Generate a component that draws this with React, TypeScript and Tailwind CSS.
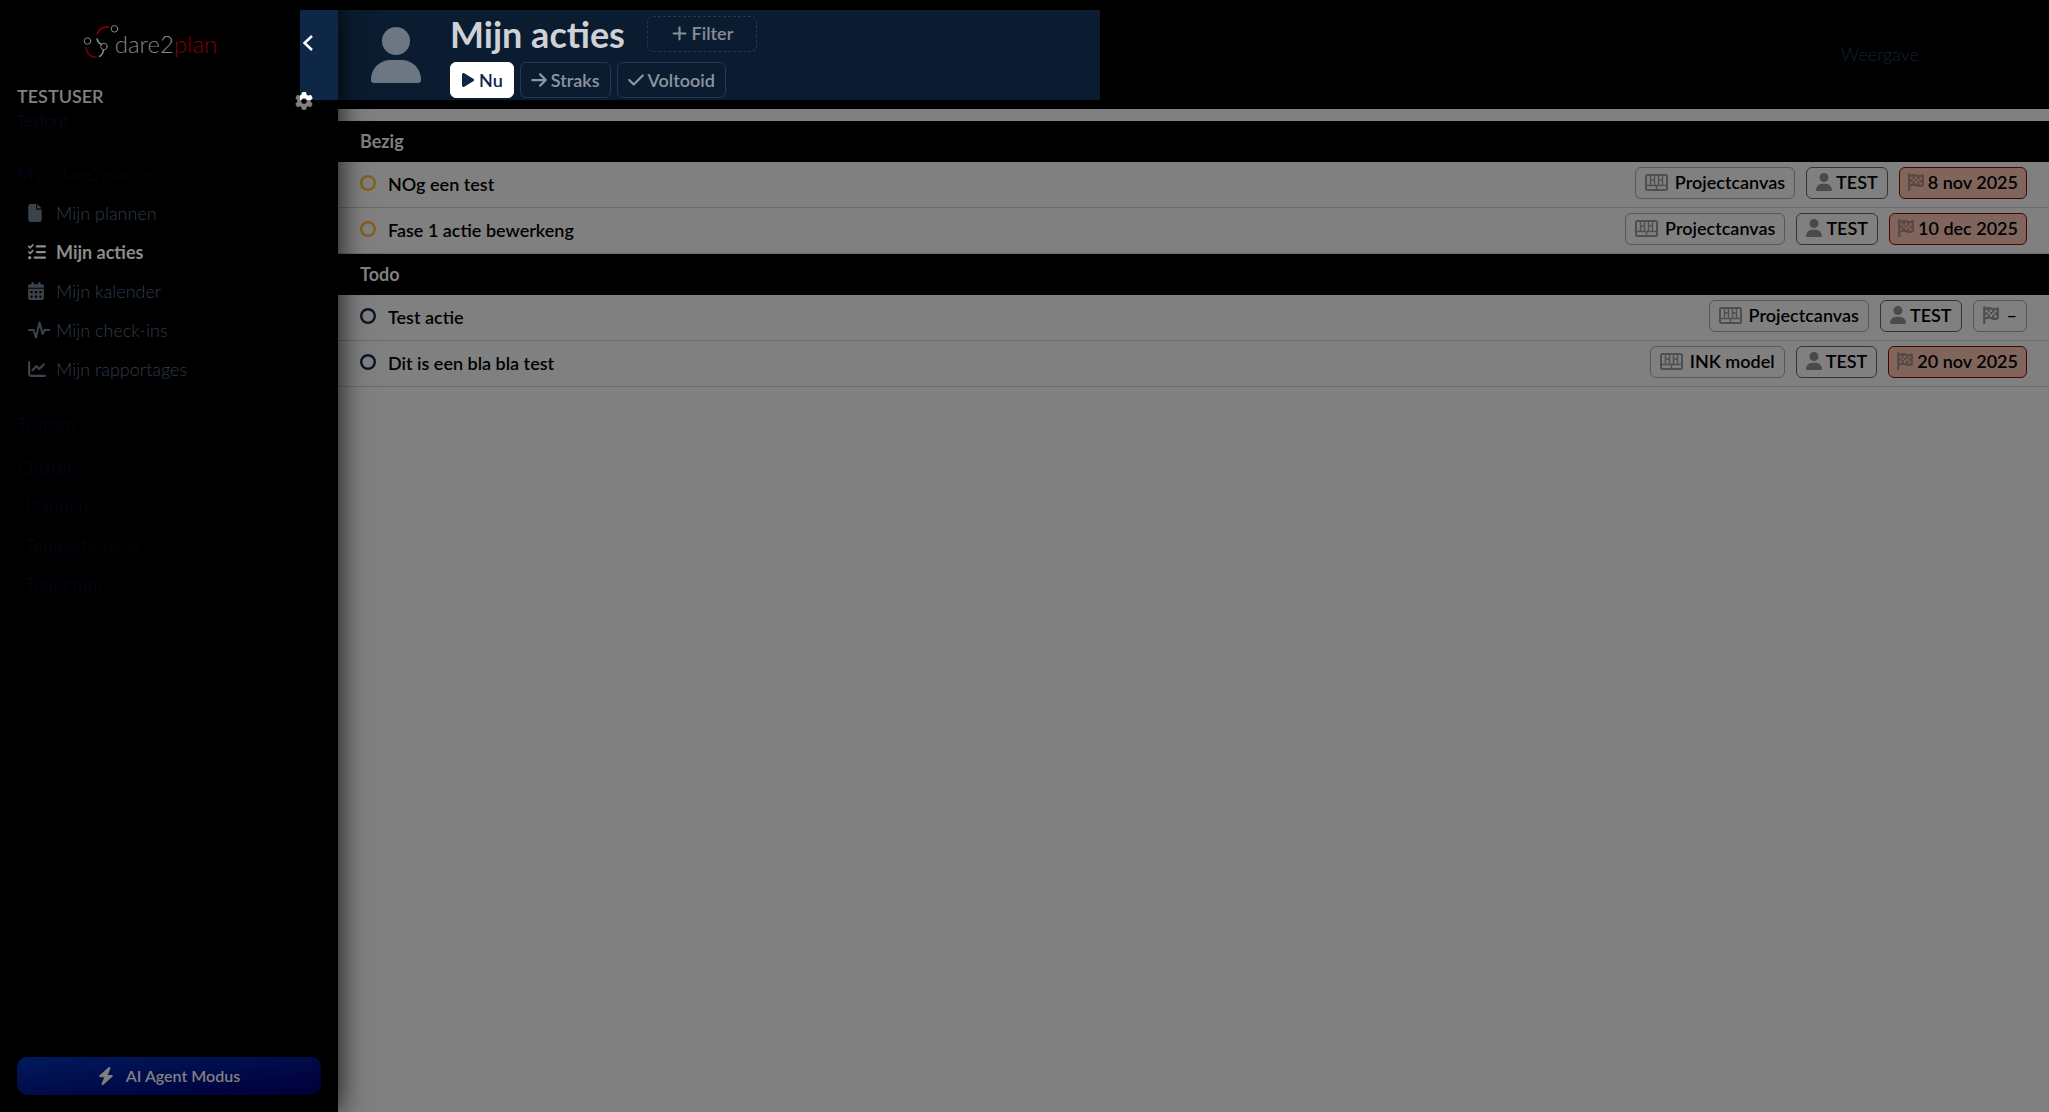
import type { ReactNode } from "react";
import clsx from "clsx";
import {
  FaArrowRight,
  FaBolt,
  FaCalendarDays,
  FaChartLine,
  FaCheck,
  FaFile,
  FaFlagCheckered,
  FaGear,
  FaListCheck,
  FaPlay,
  FaPlus,
  FaUser,
} from "react-icons/fa6";

interface Action {
  title: string;
  plan: string;
  owner: string;
  due: string | null;
}

interface Group {
  name: string;
  ring: string;
  actions: Action[];
}

const groups: Group[] = [
  {
    name: "Bezig",
    ring: "text-[#84601a]",
    actions: [
      { title: "NOg een test", plan: "Projectcanvas", owner: "TEST", due: "8 nov 2025" },
      { title: "Fase 1 actie bewerkeng", plan: "Projectcanvas", owner: "TEST", due: "10 dec 2025" },
    ],
  },
  {
    name: "Todo",
    ring: "text-[#0b1626]",
    actions: [
      { title: "Test actie", plan: "Projectcanvas", owner: "TEST", due: null },
      { title: "Dit is een bla bla test", plan: "INK model", owner: "TEST", due: "20 nov 2025" },
    ],
  },
];

function PulseIcon() {
  return (
    <svg viewBox="0 0 22 18" className="h-[18px] w-[22px]" fill="none" stroke="currentColor" strokeWidth="2" strokeLinecap="round" strokeLinejoin="round">
      <path d="M1 9h4.5L8 16.5 11.5 1.5 14.5 13 16.5 9H21" />
    </svg>
  );
}

function CanvasIcon() {
  return (
    <svg viewBox="0 0 23 17" className="h-[17px] w-[23px] shrink-0" fill="none" stroke="currentColor" strokeWidth="1.5">
      <rect x="1" y="1" width="21" height="15" rx="1.5" strokeWidth="2" />
      <path d="M1 11.500h21M5.500 1v10.500M9.500 1v10.500M13.500 1v10.500M17.500 1v10.500M11.500 11.500V16M5.500 6h4M13.500 6h4" />
    </svg>
  );
}

function Logo() {
  return (
    <a href="#" className="flex items-center gap-1 text-[#7f868c]">
      <svg viewBox="0 0 36 34" className="h-[34px] w-9" fill="none" strokeWidth="1.6" strokeLinecap="round">
        <circle cx="4.500" cy="16" r="3.3" stroke="currentColor" strokeWidth="1" />
        <circle cx="31.500" cy="3.800" r="3.3" stroke="currentColor" strokeWidth="1" />
        <circle cx="21" cy="21.500" r="3.3" stroke="currentColor" strokeWidth="1" />
        <path d="M14 14q1 4 4.500 5.500M20.500 25q-.5 4.500-4 6.500" stroke="currentColor" />
        <path d="M14 9Q17 1 26 2M3 22.500Q4 31.500 13 32.500" stroke="#800000" />
      </svg>
      <span className="-ml-2 pt-1 text-2xl leading-6 font-light">
        dare2<span className="text-[#800000]">plan</span>
      </span>
    </a>
  );
}

const menu: { label: string; icon: ReactNode; active?: boolean }[] = [
  { label: "Mijn plannen", icon: <FaFile className="h-[18px] w-3.5" /> },
  { label: "Mijn acties", icon: <FaListCheck className="size-[18px]" />, active: true },
  { label: "Mijn kalender", icon: <FaCalendarDays className="h-[18px] w-4" /> },
  { label: "Mijn check-ins", icon: <PulseIcon /> },
  { label: "Mijn rapportages", icon: <FaChartLine className="size-[18px]" /> },
];

function SectionToggle({ label, open }: { label: string; open?: boolean }) {
  return (
    <button type="button" className="flex h-[39px] items-center gap-2 text-lg text-[#04040f]">
      {label}
      <svg viewBox="0 0 8 8" className={clsx("size-2", open && "rotate-90")} fill="none" stroke="currentColor" strokeWidth="1.5">
        <path d="M2.500 1 5.500 4 2.500 7" />
      </svg>
    </button>
  );
}

function Sidebar() {
  return (
    <aside className="relative z-10 flex w-[338px] shrink-0 flex-col bg-black pt-2.5 shadow-[0_0_28px_rgba(0,0,0,0.9)]">
      <div className="relative flex items-start">
        <div className="min-w-0 flex-1">
          <div className="flex h-[72px] items-center justify-center pb-2">
            <Logo />
          </div>
          <p className="px-[17px] text-lg leading-7 font-semibold text-[#808080]">TESTUSER</p>
          <p className="px-[17px] text-base leading-5 font-light text-[#041024]">Testorg</p>
        </div>
        <button type="button" aria-label="Menu inklappen" className="flex h-[90px] w-[38px] items-start bg-[#0f2747] pt-6 pl-0.5 text-white">
          <svg viewBox="0 0 12 18" className="h-[18px] w-3" fill="none" stroke="currentColor" strokeWidth="2.500">
            <path d="M10 2 2.500 9 10 16" />
          </svg>
        </button>
        <button type="button" aria-label="Instellingen" className="absolute top-[82px] right-[25px] size-[18px]">
          <FaGear className="size-[18px] text-[#808080]" />
          <FaGear className="absolute inset-0 size-[18px] text-white [clip-path:inset(0_0_10px_5px)]" />
        </button>
      </div>

      <nav className="mt-6 flex flex-1 flex-col px-[17px]">
        <SectionToggle label="Mijn dare2plan" open />
        <ul className="mb-4">
          {menu.map((item) => (
            <li key={item.label}>
              <a
                href="#"
                className={clsx(
                  "flex h-[39px] items-center pl-[11px] text-lg",
                  item.active ? "font-bold text-[#8c8c8c]" : "font-light text-[#2f3c4b]",
                )}
              >
                <span className={clsx("flex w-7", !item.active && "text-[#3a434c]")}>{item.icon}</span>
                {item.label}
              </a>
            </li>
          ))}
        </ul>
        <SectionToggle label="Testorg" />
        <div className="mt-1">
          <SectionToggle label="Clusters" open />
        </div>
        <div className="pl-2">
          <SectionToggle label="Plannen" />
          <SectionToggle label="Template tests" />
          <SectionToggle label="Trajectum" />
        </div>
      </nav>

      <div className="p-[17px]">
        <button
          type="button"
          className="flex h-[38px] w-full items-center justify-center gap-3 rounded-[10px] bg-linear-to-br from-[#001a5e] to-[#000038] text-base font-semibold text-[#808080]"
        >
          <FaBolt className="h-[18px] w-4" />
          AI Agent Modus
        </button>
      </div>
    </aside>
  );
}

function Tab({ icon, label, active }: { icon: ReactNode; label: string; active?: boolean }) {
  return (
    <button
      type="button"
      className={clsx(
        "flex h-9 items-center gap-1 rounded-md border px-2.5 text-lg font-semibold",
        active ? "border-white bg-white text-[#0f2747]" : "border-[#28384c] text-[#8d959e]",
      )}
    >
      {icon}
      {label}
    </button>
  );
}

function Header() {
  return (
    <header className="flex h-[109px] items-start justify-between bg-black pt-2.5">
      <div className="flex h-[90px] w-[762px] items-start bg-[#0b1c31] pl-[33px]">
        <svg viewBox="0 0 50 56" className="mt-[17px] h-14 w-[50px]" fill="#6d7783">
          <circle cx="25" cy="14" r="14" />
          <path d="M0 53C0 41 9 33 20 33h10c11 0 20 8 20 20q0 3-3 3H3q-3 0-3-3Z" />
        </svg>
        <div className="ml-[29px]">
          <div className="flex h-[52px] items-start gap-[22px]">
            <h1 className="text-4xl leading-[48px] font-bold text-[#ced2d6]">Mijn acties</h1>
            <button
              type="button"
              className="mt-1.5 flex h-9 w-[110px] items-center justify-center gap-1 rounded-md border border-dashed border-[#28384c] pb-0.5 text-lg font-semibold text-[#858e98]"
            >
              <FaPlus className="size-[17px]" />
              Filter
            </button>
          </div>
          <div className="flex gap-1.5">
            <Tab icon={<FaPlay className="h-4 w-3.5" />} label="Nu" active />
            <Tab icon={<FaArrowRight className="h-[18px] w-4" />} label="Straks" />
            <Tab icon={<FaCheck className="h-[18px] w-4" />} label="Voltooid" />
          </div>
        </div>
      </div>
      <button type="button" className="mt-8 mr-[130px] text-lg leading-6 font-light text-[#142230]">
        Weergave
      </button>
    </header>
  );
}

function Chip({ icon, tone, children }: { icon: ReactNode; tone: string; children: ReactNode }) {
  return (
    <button type="button" className={clsx("flex h-8 items-center rounded-md border pb-px text-lg font-semibold text-black", tone)}>
      {icon}
      {children}
    </button>
  );
}

function ActionRow({ action, ring }: { action: Action; ring: string }) {
  return (
    <li className="flex h-[46px] items-center justify-between border-b border-[#666b6e] px-[22px] pb-1">
      <div className="flex items-center gap-3">
        <button type="button" aria-label="Status" className={ring}>
          <svg viewBox="0 0 16 16" className="size-4" fill="none" stroke="currentColor" strokeWidth="2.400">
            <circle cx="8" cy="8" r="6.800" />
          </svg>
        </button>
        <a href="#" className="pt-0.5 text-lg font-semibold text-black">
          {action.title}
        </a>
      </div>
      <div className="flex gap-[11px]">
        <Chip icon={<span className="mr-[7px] text-[#4f4f4f]"><CanvasIcon /></span>} tone="border-[#4f5b63] px-[9px]">
          {action.plan}
        </Chip>
        <Chip icon={<FaUser className="mr-1 h-[18px] w-4 text-[#4a4a4a]" />} tone="border-[#333] px-[9px]">
          {action.owner}
        </Chip>
        <Chip
          icon={<FaFlagCheckered className={clsx("h-[18px] w-4", action.due ? "mr-1 text-[#594742]" : "mr-2 text-[#4f4f4f]")} />}
          tone={action.due ? "border-[#500000] bg-[#80655d] px-2" : "border-[#4f5b63] px-[9px]"}
        >
          {action.due ?? "–"}
        </Chip>
      </div>
    </li>
  );
}

export default function App() {
  return (
    <div className="flex min-h-screen bg-[#808080] font-[Lato,sans-serif]">
      <Sidebar />
      <main className="min-w-0 flex-1">
        <Header />
        <div className="pt-3">
          {groups.map((group) => (
            <section key={group.name}>
              <h2 className="h-[41px] bg-black px-[22px] text-lg leading-[41px] font-bold text-[#808080]">{group.name}</h2>
              <ul>
                {group.actions.map((action) => (
                  <ActionRow key={action.title} action={action} ring={group.ring} />
                ))}
              </ul>
            </section>
          ))}
        </div>
      </main>
    </div>
  );
}
